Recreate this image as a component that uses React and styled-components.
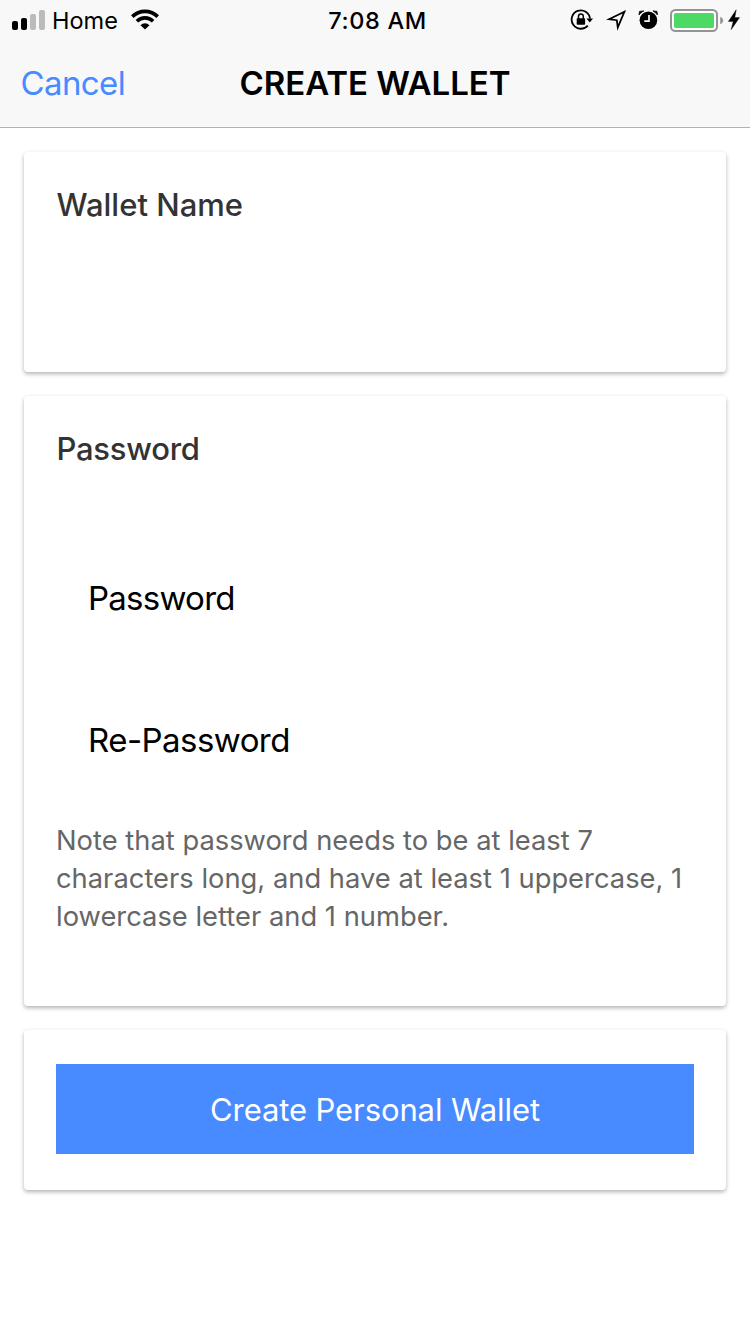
import React from "react";
import styled, { createGlobalStyle } from "styled-components";

const GlobalStyle = createGlobalStyle`
  *, *::before, *::after { box-sizing: border-box; }
  body {
    margin: 0;
    background: #fff;
    font-family: Inter, "Liberation Sans", sans-serif;
    font-feature-settings: "calt" 0;
  }
`;

const Page = styled.div`
  width: 750px;
  min-height: 1334px;
  display: flex;
  flex-direction: column;
`;

const Header = styled.header`
  height: 128px;
  background: #f8f8f8;
  border-bottom: 1px solid #b2b2b2;
`;

const StatusBar = styled.div`
  height: 40px;
  display: grid;
  grid-template-columns: 1fr auto 1fr;
  align-items: center;
  padding: 0 10px 0 12px;
`;

const StatusGroup = styled.div`
  display: flex;
  align-items: center;
  justify-content: ${(p) => (p.$end ? "flex-end" : "flex-start")};
`;

const Carrier = styled.span`
  margin: 0 13px 0 7px;
  padding-top: 2px;
  font-size: 23.5px;
  line-height: 38px;
`;

const Clock = styled.span`
  padding: 2px 0 0 3px;
  font-size: 23.5px;
  font-weight: 500;
  line-height: 38px;
  letter-spacing: 0.65px;
`;

const Icon = styled.svg`
  display: block;
  flex: none;
  margin-left: ${(p) => p.$gap || 0}px;
`;

const NavBar = styled.div`
  height: 85px;
  display: grid;
  grid-template-columns: 1fr auto 1fr;
  align-items: center;
  padding: 0 20px;
`;

const CancelButton = styled.button`
  justify-self: start;
  padding: 0 0 0 0.5px;
  border: 0;
  background: none;
  color: #488aff;
  font: 400 33px/40px Inter, sans-serif;
  letter-spacing: -0.6px;
`;

const Title = styled.h1`
  margin: 0;
  font-size: 33px;
  font-weight: 600;
  line-height: 40px;
  letter-spacing: -0.05px;
`;

const Content = styled.main`
  display: flex;
  flex-direction: column;
  gap: 24px;
  padding: 24px;
`;

const Card = styled.section`
  height: ${(p) => p.$height}px;
  padding: 34px 32px 0;
  border-radius: 4px;
  background: #fff;
  box-shadow: 0 2px 4px rgba(0, 0, 0, 0.3);
`;

const CardTitle = styled.h2`
  margin: 0;
  padding-left: 0.5px;
  color: #333;
  font-size: 31px;
  font-weight: 500;
  line-height: 38px;
  letter-spacing: ${(p) => p.$spacing || "0"};
`;

const TextInput = styled.input`
  flex: 1;
  min-width: 0;
  width: 100%;
  height: 88px;
  padding: 0 32px;
  border: 0;
  outline: 0;
  background: transparent;
  font: 400 33px Inter, sans-serif;
`;

const Fields = styled.div`
  margin-top: 59px;
`;

const Field = styled.label`
  height: 142px;
  display: flex;
  align-items: center;
  padding-left: 32px;
  color: #000;
  font-size: 33px;
  letter-spacing: ${(p) => p.$spacing || "-0.75px"};
`;

const Note = styled.p`
  margin: 11px 0 0;
  color: #666;
  font-size: 27.3px;
  line-height: 38px;
`;

const NoteLine = styled.span`
  display: block;
  white-space: nowrap;
  letter-spacing: 0.02px;
`;

const PrimaryButton = styled.button`
  display: block;
  width: 100%;
  height: 90px;
  padding: 2px 0 0;
  border: 0;
  background: #488aff;
  color: #fff;
  font: 400 31px/40px Inter, sans-serif;
  letter-spacing: -0.1px;
`;

const SignalIcon = () => (
  <Icon width="33" height="22" viewBox="0 0 33 22">
    <rect x="0" y="12" width="6" height="9" rx="2" fill="#000" />
    <rect x="9" y="9" width="6" height="12" rx="2" fill="#000" />
    <rect x="18" y="5" width="6" height="16" rx="2" fill="#bbb" />
    <rect x="27" y="1" width="6" height="20" rx="2" fill="#bbb" />
  </Icon>
);

const WifiIcon = () => (
  <Icon width="28" height="22" viewBox="0 0 28 22">
    <g fill="none" stroke="#000" strokeWidth="3.6">
      <path d="M1.3 7.6A18 18 0 0 1 26.7 7.6" />
      <path d="M5.9 12.2A11.5 11.5 0 0 1 22.1 12.2" />
    </g>
    <path d="M14 20.6L9.5 16.2A6.4 6.4 0 0 1 18.5 16.2Z" />
  </Icon>
);

const RotationLockIcon = () => (
  <Icon width="23" height="22" viewBox="0 0 23 22">
    <path d="M17.8 16.6A9.2 9.2 0 1 1 20 9.6" fill="none" stroke="#000" strokeWidth="1.8" />
    <path d="M16.4 9.4H23L19.8 13.6Z" />
    <rect x="6.7" y="9.2" width="8.4" height="6.6" rx="0.8" />
    <path d="M8.5 10V7.4a2.4 2.4 0 0 1 4.8 0V10" fill="none" stroke="#000" strokeWidth="1.5" />
  </Icon>
);

const LocationIcon = () => (
  <Icon $gap={13} width="20" height="22" viewBox="0 0 20 22">
    <path
      d="M3 10.2L18.4 2.8L11.8 18.4L10.8 11.2Z"
      fill="none"
      stroke="#000"
      strokeWidth="1.8"
      strokeMiterlimit="8"
    />
  </Icon>
);

const AlarmIcon = () => (
  <Icon $gap={12} width="20" height="22" viewBox="0 0 20 22">
    <circle cx="10.4" cy="11.3" r="8.8" />
    <path d="M1 5.9L1.5 2.4L5.8 1.9Q2.9 3.2 1 5.9ZM19.4 5.9L19 2.4L15 1.9Q17.7 3.2 19.4 5.9Z" stroke="#000" strokeWidth="0.8" />
    <path d="M11 6V12.2H6.3" fill="none" stroke="#f8f8f8" strokeWidth="1.7" />
  </Icon>
);

const BatteryIcon = () => (
  <Icon $gap={12} width="54" height="24" viewBox="0 0 54 24">
    <rect x="1" y="2" width="46" height="21" rx="4.5" fill="#fff" stroke="#949494" strokeWidth="2" />
    <rect x="4" y="5" width="40" height="15" rx="1.8" fill="#4cd964" />
    <path d="M50.2 8.7Q53.2 10 53.2 12.5T50.2 16.3Z" fill="#949494" />
  </Icon>
);

const BoltIcon = () => (
  <Icon $gap={4} width="12" height="22" viewBox="0 0 12 22">
    <path d="M8.2 0.8L0.4 12.4H5.2L3.1 20.7L11.6 8.6H6.8Z" stroke="#000" strokeWidth="0.4" />
  </Icon>
);

export default function App() {
  return (
    <Page>
      <GlobalStyle />
      <Header>
        <StatusBar>
          <StatusGroup>
            <SignalIcon />
            <Carrier>Home</Carrier>
            <WifiIcon />
          </StatusGroup>
          <Clock>7:08 AM</Clock>
          <StatusGroup $end>
            <RotationLockIcon />
            <LocationIcon />
            <AlarmIcon />
            <BatteryIcon />
            <BoltIcon />
          </StatusGroup>
        </StatusBar>
        <NavBar>
          <CancelButton>Cancel</CancelButton>
          <Title>CREATE WALLET</Title>
        </NavBar>
      </Header>
      <Content>
        <Card $height={220}>
          <CardTitle>Wallet Name</CardTitle>
          <TextInput aria-label="Wallet Name" />
        </Card>
        <Card $height={610}>
          <CardTitle $spacing="-0.25px">Password</CardTitle>
          <Fields>
            <Field>
              Password
              <TextInput type="password" />
            </Field>
            <Field $spacing="-0.55px">
              Re-Password
              <TextInput type="password" />
            </Field>
          </Fields>
          <Note>
            <NoteLine>Note that password needs to be at least 7</NoteLine>
            <NoteLine>characters long, and have at least 1 uppercase, 1</NoteLine>
            <NoteLine>lowercase letter and 1 number.</NoteLine>
          </Note>
        </Card>
        <Card $height={160}>
          <PrimaryButton>Create Personal Wallet</PrimaryButton>
        </Card>
      </Content>
    </Page>
  );
}
